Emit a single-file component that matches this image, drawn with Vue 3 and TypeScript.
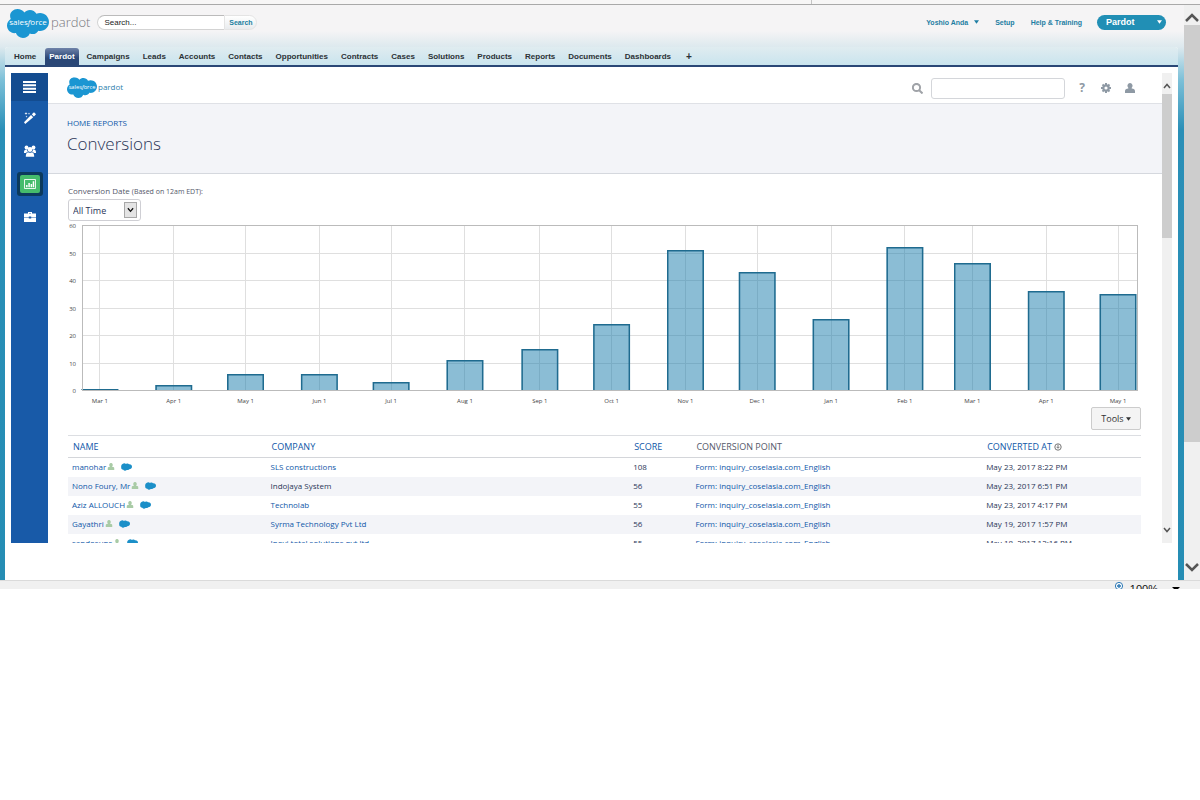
<script setup lang="ts">
interface Bar { label: string; x: number; value: number }
interface Conversion { name: string; company: string; plain?: boolean; score: number; point: string; date: string }

const tabs: string[] = ['Home', 'Pardot', 'Campaigns', 'Leads', 'Accounts', 'Contacts', 'Opportunities', 'Contracts', 'Cases', 'Solutions', 'Products', 'Reports', 'Documents', 'Dashboards', '+']

/* x is the position of the month along the time axis, in percent */
const bars: Bar[] = [
  { label: 'Mar 1', x: 1.7, value: 0.4 },
  { label: 'Apr 1', x: 8.7, value: 2 },
  { label: 'May 1', x: 15.5, value: 6 },
  { label: 'Jun 1', x: 22.5, value: 6 },
  { label: 'Jul 1', x: 29.3, value: 3 },
  { label: 'Aug 1', x: 36.3, value: 11 },
  { label: 'Sep 1', x: 43.4, value: 15 },
  { label: 'Oct 1', x: 50.2, value: 24 },
  { label: 'Nov 1', x: 57.2, value: 51 },
  { label: 'Dec 1', x: 64, value: 43 },
  { label: 'Jan 1', x: 71, value: 26 },
  { label: 'Feb 1', x: 78, value: 52 },
  { label: 'Mar 1', x: 84.4, value: 46 },
  { label: 'Apr 1', x: 91.4, value: 36 },
  { label: 'May 1', x: 98.2, value: 35 },
]
const ticks: number[] = [0, 10, 20, 30, 40, 50, 60]
const plotHeight = 165
const yOf = (v: number): number => Math.round(plotHeight - (v / 60) * plotHeight)

const point = 'Form: inquiry_coselasia.com_English'
const rows: Conversion[] = [
  { name: 'manohar', company: 'SLS constructions', score: 108, point, date: 'May 23, 2017 8:22 PM' },
  { name: 'Nono Foury, Mr', company: 'Indojaya System', plain: true, score: 56, point, date: 'May 23, 2017 6:51 PM' },
  { name: 'Aziz ALLOUCH', company: 'Technolab', score: 55, point, date: 'May 23, 2017 4:17 PM' },
  { name: 'Gayathri', company: 'Syrma Technology Pvt Ltd', score: 56, point, date: 'May 19, 2017 1:57 PM' },
  { name: 'sandosuns', company: 'Inovi total solutions pvt ltd', score: 55, point, date: 'May 18, 2017 12:16 PM' },
]
</script>

<template>
  <div class="window">
    <svg class="defs" aria-hidden="true">
      <symbol id="cloud" viewBox="0 0 42 30">
        <path d="M17.400 3.400C18.800 1.900 20.700 1 22.900 1c2.800 0 5.200 1.500 6.500 3.800 1.100-.5 2.400-.8 3.700-.8C38 4 42 8 42 12.900s-4 9-8.900 9c-.6 0-1.200-.1-1.700-.2-1.100 2-3.300 3.400-5.700 3.400-1 0-2-.2-2.900-.7C21.700 27.200 19 29 15.900 29c-3.200 0-6-2-7-4.900-.5.1-.9.1-1.400.1C3.400 24.200 0 20.800 0 16.600c0-2.800 1.500-5.200 3.800-6.500C3.300 9 3.100 7.900 3.100 6.700 3.100 3 6.600 0 10.400 0c2.900 0 5.500 1.300 7 3.400z" />
      </symbol>
      <symbol id="user" viewBox="0 0 10 10">
        <path d="M5 0a2.500 2.700 0 0 1 1.700 4.700v.8C8.800 5.800 10 6.500 10 8.200V10H0V8.200C0 6.500 1.200 5.800 3.300 5.500v-.8A2.500 2.700 0 0 1 5 0z" />
      </symbol>
    </svg>

    <div class="chrome-top"><span></span></div>
    <div class="viewport">
      <div class="page">
        <header class="banner">
          <a class="logo" href="#"><svg class="logo-svg" viewBox="0 0 42 30"><use href="#cloud" /><text x="21" y="16" text-anchor="middle">sales<tspan font-style="italic">f</tspan>orce</text></svg><span>pardot</span></a>
          <form class="search" @submit.prevent>
            <input type="text" aria-label="Search" placeholder="Search..." /><button type="submit">Search</button>
          </form>
          <nav class="account">
            <a href="#">Yoshio Anda <svg class="tri" viewBox="0 0 6 4"><path d="M0 0h6L3 4z" /></svg></a>
            <a href="#">Setup</a>
            <a href="#">Help &amp; Training</a>
          </nav>
          <button class="app-menu" type="button">Pardot<svg class="tri" viewBox="0 0 6 4"><path d="M0 0h6L3 4z" /></svg></button>
        </header>

        <div class="body">
          <nav class="tabs">
            <a v-for="tab in tabs" :key="tab" href="#" :class="{ active: tab === 'Pardot', plus: tab === '+' }">{{ tab }}</a>
          </nav>

          <div class="frame">
            <aside class="side">
              <button class="menu" type="button" aria-label="Menu"><svg viewBox="0 0 13 12"><path d="M0 1h13M0 4.300h13M0 7.700h13M0 11h13" stroke="#fff" stroke-width="2" /></svg></button>
              <a href="#" aria-label="Marketing"><svg viewBox="0 0 12 12"><path d="M1.200 12l-1.200-1.700L7 3l2.200 2.200zM7.800 2.300L10 .3l2 2L9.900 4.500zM2 0l.4 1.100 1.100.4-1.100.4L2 3l-.4-1.100L.5 1.500l1.100-.4zM5 .6l.3.900.9.3-.9.3L5 3l-.3-.9-.9-.3.900-.3zM2.500 3.600l.3.800.7.200-.7.300-.3.700-.3-.7-.7-.3.700-.2z" /></svg></a>
              <a href="#" aria-label="Prospects"><svg viewBox="0 0 12 12"><circle cx="2.500" cy="2.500" r="1.900" /><circle cx="9.500" cy="2.500" r="1.900" /><circle cx="6" cy="4.500" r="2.400" /><path d="M0 7.400c0-2.200.8-3.200 3-3 .1 1.300.5 2 1 2.600-1 .1-1.500.4-2 1H0zM12 7.400c0-2.200-.8-3.200-3-3-.1 1.300-.5 2-1 2.600 1 .1 1.500.4 2 1h2zM1.800 11.700C1.800 9 2.600 7.400 4.100 7.200c1.100.8 2.700.8 3.800 0 1.500.2 2.300 1.800 2.300 4.500z" /></svg></a>
              <a class="current" href="#" aria-label="Reports"><span><svg viewBox="0 0 13 11"><path d="M.5.5h12v10H.5z" fill="none" stroke="#fff" /><path d="M2.200 6.500h1.600V9H2.200zM4.700 4.500h1.600V9H4.700zM7.200 5.500h1.600V9H7.200zM9.500 2.500h1.600V9H9.500z" /></svg></span></a>
              <a href="#" aria-label="Admin"><svg viewBox="0 0 12 12"><path d="M4 2.500V1h4v1.500h4V6.200H7.200v-.8H4.800v.8H0V2.500zM5 2.500h2V1.900H5zM0 6.800h4.800v.8h2.400v-.8H12V11H0z" /></svg></a>
            </aside>

            <main class="content">
              <div class="appbar">
                <a class="logo small" href="#"><svg class="logo-svg" viewBox="0 0 42 30"><use href="#cloud" /><text x="21" y="16" text-anchor="middle">sales<tspan font-style="italic">f</tspan>orce</text></svg><span>pardot</span></a>
                <div class="appbar-tools">
                  <svg class="glass" viewBox="0 0 11 11"><circle cx="4.500" cy="4.500" r="3.600" /><path d="M7.200 7.200L10.500 10.500" /></svg>
                  <input type="text" aria-label="Search Pardot" />
                  <button type="button" class="help">?</button>
                  <button type="button" aria-label="Settings"><svg viewBox="0 0 10 10"><circle cx="5" cy="5" r="2.700" fill="none" stroke="#8e99a4" stroke-width="2.200" /><path d="M5 0v2M5 8v2M0 5h2M8 5h2M1.500 1.500l1.400 1.400M7.100 7.100l1.400 1.400M8.500 1.500L7.100 2.900M2.900 7.100L1.500 8.500" stroke="#8e99a4" stroke-width="2" /></svg></button>
                  <button type="button" aria-label="Profile"><svg viewBox="0 0 10 10"><use href="#user" /></svg></button>
                </div>
              </div>

              <div class="heading">
                <a href="#">HOME REPORTS</a>
                <h1>Conversions</h1>
              </div>

              <div class="report">
                <label for="range">Conversion Date <small>(Based on 12am EDT):</small></label>
                <div class="select">
                  <select id="range"><option>All Time</option></select>
                  <svg viewBox="0 0 8 6"><path d="M1 1l3 3.500L7 1" /></svg>
                </div>

                <div class="chart">
                  <svg width="100%" height="182" role="img" aria-label="Conversions per month">
                    <g v-for="t in ticks" :key="t">
                      <line class="grid" x1="0" x2="100%" :y1="yOf(t)" :y2="yOf(t)" />
                      <text class="ylabel" x="-6" :y="yOf(t) + 3">{{ t }}</text>
                    </g>
                    <g v-for="(b, i) in bars" :key="i">
                      <line class="grid" :x1="b.x + '%'" :x2="b.x + '%'" y1="0" :y2="plotHeight" />
                      <svg :x="b.x - 1.75 + '%'" :y="yOf(b.value)" width="3.5%" :height="plotHeight - yOf(b.value)">
                        <rect class="bar" x="0" y="0" width="100%" :height="plotHeight" />
                      </svg>
                      <text class="xlabel" :x="b.x + '%'" y="178">{{ b.label }}</text>
                    </g>
                    <rect class="outline" x="0" y="0" width="100%" :height="plotHeight" />
                  </svg>
                </div>

                <div class="tools">
                  <button type="button">Tools <svg class="tri" viewBox="0 0 6 4"><path d="M0 0h6L3 4z" /></svg></button>
                </div>

                <table>
                  <thead>
                    <tr>
                      <th class="c-name"><a href="#">NAME</a></th>
                      <th class="c-company"><a href="#">COMPANY</a></th>
                      <th class="c-score"><a href="#">SCORE</a></th>
                      <th class="c-point">CONVERSION POINT</th>
                      <th><a href="#">CONVERTED AT</a> <svg class="sort" viewBox="0 0 8 8"><circle cx="4" cy="4" r="3.200" /><path d="M4 1.500v3.500M2.500 3.800L4 5.300 5.500 3.800" /></svg></th>
                    </tr>
                  </thead>
                  <tbody>
                    <tr v-for="r in rows" :key="r.name">
                      <td><a href="#">{{ r.name }}</a><svg class="person" viewBox="0 0 10 10"><use href="#user" /></svg><svg class="mini" viewBox="0 0 11 8"><path d="M1.500 1C3 0 4 .3 5 .9 6.500.2 7.500.6 8 1.300c2-.2 3 1 3 2.500S9.800 6.200 8.300 6.200C7.500 7 6.500 7.200 5.800 7 4.500 8 3 7.800 2.300 6.700.8 6.600 0 5.600.2 4.300 0 3 .5 1.500 1.500 1z" /></svg></td>
                      <td><span v-if="r.plain">{{ r.company }}</span><a v-else href="#">{{ r.company }}</a></td>
                      <td>{{ r.score }}</td>
                      <td><a href="#">{{ r.point }}</a></td>
                      <td>{{ r.date }}</td>
                    </tr>
                  </tbody>
                </table>
              </div>
            </main>

            <div class="scroll inner">
              <svg viewBox="0 0 10 8"><path d="M2 6l3-3.500L8 6" /></svg>
              <div class="thumb"></div>
              <svg class="down" viewBox="0 0 10 8"><path d="M2 2l3 3.500L8 2" /></svg>
            </div>
          </div>
        </div>
      </div>

      <div class="scroll outer">
        <svg viewBox="0 0 16 12"><path d="M2 9l6-6L14 9" /></svg>
        <div class="thumb"></div>
        <svg class="down" viewBox="0 0 16 12"><path d="M2 3l6 6L14 3" /></svg>
      </div>
    </div>

    <footer class="status">
      <svg viewBox="0 0 10 10"><circle cx="5" cy="4" r="3.600" fill="#fff" stroke="#2b78b5" /><path d="M5 2v4M3 4h4" stroke="#2b78b5" stroke-width="1.300" /></svg>
      <span>100%</span>
      <svg viewBox="0 0 8 8"><path d="M0 3h8L4 7z" fill="#000" /></svg>
    </footer>
  </div>
</template>

<style>
body { margin: 0; background: #fff; }
</style>

<style scoped>
* { box-sizing: border-box; }
.window { font-family: "Liberation Sans", sans-serif; font-size: 8px; color: #2a3557; }
.defs { position: absolute; width: 0; height: 0; }
a { text-decoration: none; color: #0f57a8; }
button, input, select { font-family: inherit; margin: 0; }
svg { display: block; flex: none; }

.chrome-top { height: 5px; background: #f7f6f6; border-bottom: 1px solid #a9a9a9; }
.chrome-top span { display: block; width: 1px; height: 4px; margin-left: 67.6%; background: #c4c4c4; }
.viewport { display: flex; }
.page { flex: 1; min-width: 0; padding: 0 6px 0 5px; background: linear-gradient(#f5f4f5 0, #f5f4f5 26px, #dde9ee 42px, #7cc0d8 75px, #2a8fb7 125px, #258db4 100%); }

.banner { display: flex; align-items: center; height: 42px; padding: 0 12px 8px 2px; }
.logo { display: flex; align-items: center; gap: 2px; color: #77777c; font: 300 13px "Open Sans", sans-serif; }
.logo span { padding-bottom: 5px; }
.logo-svg { width: 42px; height: 30px; fill: #1b96d2; }
.logo-svg text { fill: #fff; font: 8px "Open Sans", sans-serif; }
.banner .logo { height: 34px; margin-top: 4px; }
.logo.small { color: #2f7fae; font-size: 8px; font-weight: 400; gap: 1px; }
.logo.small span { padding-bottom: 4px; }
.logo.small .logo-svg { width: 30px; height: 22px; }
.search { display: flex; height: 15px; margin-left: 7px; }
.search input { width: 127px; border: 1px solid #d3d3d3; border-top-color: #bbb; border-right: 0; border-radius: 8px 0 0 8px; padding: 0 6px; font-size: 8px; background: #fff; outline: 0; }
.search input::placeholder { color: #222; opacity: 1; }
.search button { width: 33px; border: 1px solid #e4e4e4; border-radius: 0 8px 8px 0; background: linear-gradient(#fff, #e9ecee); padding: 0; color: #1c7f9f; font-size: 7px; font-weight: bold; }
.account { display: flex; gap: 16px; margin-left: auto; font-size: 7px; font-weight: bold; }
.account a { display: flex; align-items: center; gap: 6px; color: #1e7ea3; }
.tri { width: 5px; height: 4px; fill: currentColor; }
.app-menu { display: flex; align-items: center; justify-content: space-between; width: 69px; height: 15px; margin-left: 15px; padding: 0 4px 0 9px; border: 0; border-radius: 8px; background: #218fb5; color: #fff; font-size: 9px; font-weight: bold; }

.body { background: #fff; padding-bottom: 37px; border-radius: 3px 3px 0 0; }
.tabs { display: flex; height: 20px; padding-left: 2px; border-bottom: 2px solid #2a4776; background: linear-gradient(#e0ecf0, #c9e4ee); border-radius: 3px 3px 0 0; }
.tabs a { padding: 0 6px 0 7px; line-height: 19px; font-weight: bold; color: #2b3135; }
.tabs a.active { margin: 1px 1px 0 3px; line-height: 17px; color: #fff; background: linear-gradient(#6f83a9, #2a4776 60%); border-radius: 3px 3px 0 0; padding: 0 4px; }
.tabs a.plus { padding-left: 9px; font-size: 10px; }

.frame { display: flex; height: 470px; margin: 6px 6px 0; overflow: hidden; font-family: "Open Sans", sans-serif; }
.side { width: 37px; background: #185aa8; display: flex; flex-direction: column; align-items: center; }
.side > * { display: flex; align-items: center; justify-content: center; width: 100%; height: 33px; fill: #fff; }
.side svg { width: 12px; height: 12px; }
.side .menu { height: 28px; border: 0; background: #134c90; padding: 0; }
.side .menu svg { width: 13px; }
.side .current { width: 26px; height: 24px; margin: 5px 0 4px; border-radius: 3px; background: #0c3a5c; }
.current span { padding: 4px; background: #45bc6c; border-radius: 2px; }
.side .current svg { width: 12px; height: 10px; }

.content { flex: 1; min-width: 0; }
.appbar { display: flex; justify-content: space-between; align-items: center; height: 31px; padding: 0 27px 0 19px; border-bottom: 1px solid #dfe1e6; }
.appbar-tools { display: flex; align-items: center; }
.glass { width: 11px; height: 11px; margin-right: 8px; fill: none; stroke: #a0a3a8; stroke-width: 2; }
.appbar-tools input { width: 134px; height: 21px; margin-right: 12px; border: 1px solid #d4d6da; border-radius: 3px; background: #fff; }
.appbar-tools button { border: 0; background: none; width: 10px; margin-right: 14px; padding: 0; color: #8e99a4; fill: #8e99a4; }
.appbar-tools button:last-child { margin-right: 0; }
.appbar-tools button svg { width: 10px; height: 10px; }
.appbar-tools .help { font-size: 12px; font-weight: bold; line-height: 12px; }
.heading { height: 70px; padding: 12px 20px 0 19px; background: #f3f4f8; border-bottom: 1px solid #d5d8de; font-size: 8px; line-height: 14px; }
.heading a { display: block; }
h1 { margin: 3px 0 0; font-size: 17px; line-height: 22px; font-weight: 300; color: #2a3557; }

.report { padding: 11px 21px 0 20px; }
.report label { display: block; font-size: 8px; line-height: 12px; color: #54586a; }
label small { font-size: 7px; }
.select { display: grid; width: 73px; height: 22px; margin-top: 1px; align-items: center; }
.select select { grid-area: 1 / 1; width: 100%; height: 100%; padding: 0 4px; border: 1px solid #cfcfd4; border-radius: 3px; background: #fff; color: #2a3557; font-size: 9px; appearance: none; }
.select svg { grid-area: 1 / 1; justify-self: end; width: 13px; height: 16px; margin-right: 4px; padding: 2px; border: 1px solid #a8a8a8; background: #e4e4e4; fill: none; stroke: #111; stroke-width: 1.500; pointer-events: none; }

.chart { padding: 4px 4px 0 14px; }
.chart > svg { overflow: visible; }
.grid { stroke: #dfdfdf; shape-rendering: crispEdges; }
.outline { fill: none; stroke: #bbb; shape-rendering: crispEdges; }
.bar { fill: #187bac; fill-opacity: .5; stroke: #1f6b8f; stroke-width: 3; }
.ylabel { font-size: 6px; text-anchor: end; fill: #444; }
.xlabel { font-size: 6px; text-anchor: middle; fill: #444; }
.tools { display: flex; justify-content: flex-end; margin-bottom: 5px; }
.tools button { display: flex; align-items: center; justify-content: center; gap: 2px; width: 50px; height: 23px; padding: 0; border: 1px solid #ccc; border-radius: 2px; background: #f4f4f4; color: #333; font-size: 9px; }

table { width: 100%; table-layout: fixed; border-collapse: separate; border-spacing: 0; border-top: 1px solid #dcdee2; }
th { height: 22px; padding: 0 0 0 5px; border-bottom: 1px solid #d4d6da; text-align: left; font-size: 9px; line-height: 12px; font-weight: 400; color: #54586a; white-space: nowrap; }
td { height: 19px; padding: 0 0 1px 4px; line-height: 12px; white-space: nowrap; }
tbody tr:nth-child(even) { background: #f3f4f8; }
.c-name { width: 18.5%; }
.c-company { width: 33.8%; }
.c-score { width: 5.8%; }
.c-point { width: 27.1%; }
.sort { display: inline-block; width: 8px; height: 8px; vertical-align: -1px; fill: none; stroke: #777; }
.person { display: inline-block; width: 8px; height: 7px; margin-left: 1px; fill: #a9cba6; }
.mini { display: inline-block; width: 11px; height: 8px; margin-left: 6px; vertical-align: -1px; fill: #1b8fc8; }

.scroll { display: flex; flex-direction: column; align-items: center; background: #f0f0f0; fill: none; stroke: #555; }
.scroll .thumb { width: 100%; background: #cdcdcd; }
.scroll .down { margin-top: auto; }
.inner { width: 10px; stroke-width: 1.500; padding: 9px 0; }
.inner svg { width: 10px; height: 8px; }
.inner .thumb { height: 144px; margin-top: 4px; }
.outer { width: 16px; stroke-width: 2.500; padding: 7px 0; }
.outer svg { width: 16px; height: 12px; }
.outer .thumb { height: 417px; margin-top: 1px; }

.status { display: flex; gap: 6px; height: 9px; padding: 1px 20px 0 0; justify-content: flex-end; overflow: hidden; background: #f0f0f0; border-top: 1px solid #dadada; color: #111; font-size: 11px; line-height: 14px; }
.status svg { width: 10px; height: 10px; }
.status svg:last-child { width: 8px; margin-top: 1px; }
.status span { margin-right: 8px; }
</style>
